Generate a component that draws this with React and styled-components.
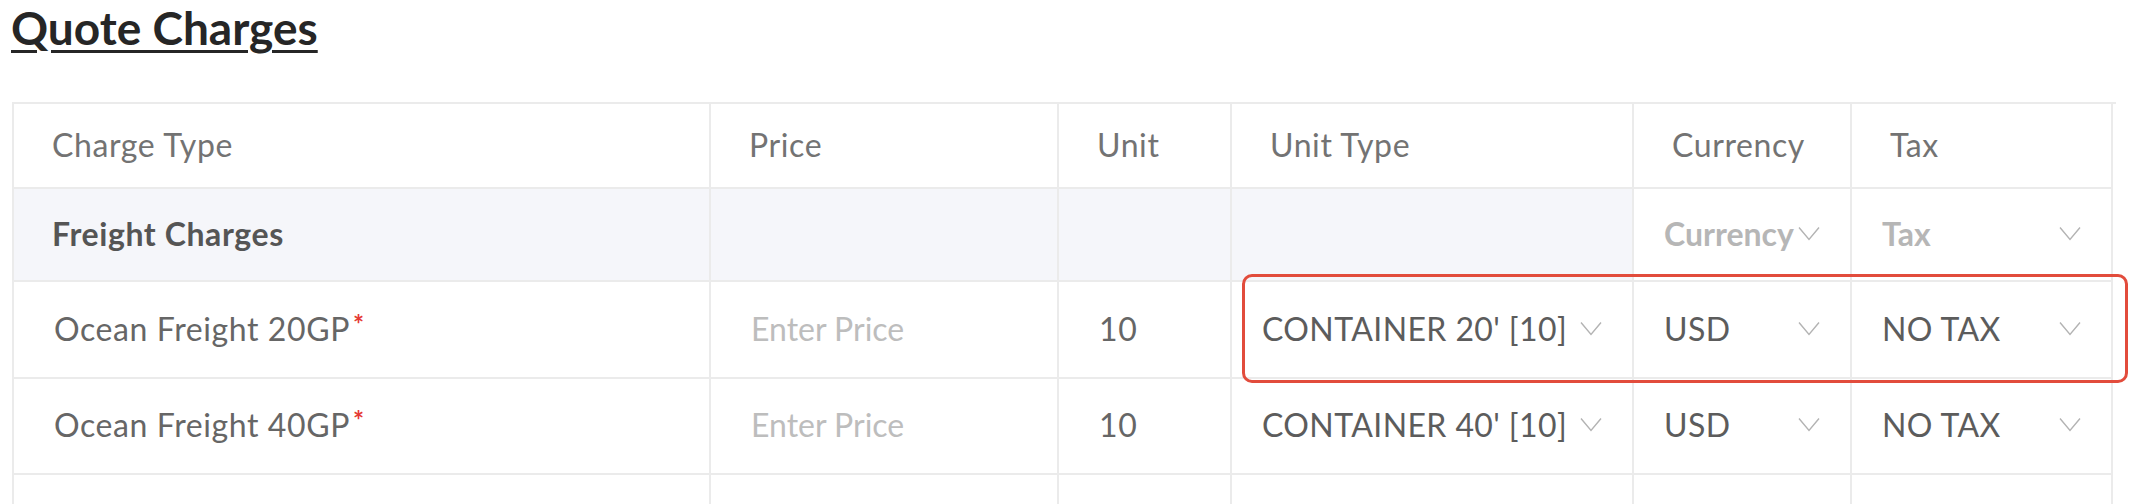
import React from 'react';
import styled, { createGlobalStyle } from 'styled-components';

const GlobalStyle = createGlobalStyle`
    html, body {
        margin: 0;
        padding: 0;
        overflow: hidden;
        background: #ffffff;
        font-family: Lato, "Noto Sans", sans-serif;
    }
`;

/** Page -- Container and Title */
const Page = styled.div`
    padding: 5px 12px 0 12px;
`;

const Title = styled.h1`
    margin: 0 0 52px -1px;
    font-size: 46px;
    line-height: 45px;
    font-weight: 700;
    color: #262626;
    text-decoration: underline;
    text-decoration-thickness: 3px;
    text-underline-offset: 5px;
`;

/** Table -- Grid and Cells */
const Table = styled.div`
    position: relative;
    display: grid;
    width: 2102px;
    grid-template-columns: 697px 348px 173px 402px 218px 261px;
    grid-template-rows: 85px 93px 97px 96px 96px;
    border-top: 2px solid #ebebeb;
    border-left: 2px solid #ebebeb;
`;

const Cell = styled.div`
    box-sizing: border-box;
    display: flex;
    align-items: center;
    padding: 0 ${({ $pad }) => $pad ?? 38}px 3px ${({ $pad }) => $pad ?? 38}px;
    border-right: 2px solid #ebebeb;
    border-bottom: 2px solid #ebebeb;
    background: ${({ $shade }) => ($shade ? '#f5f6fa' : '#ffffff')};
    font-size: 32px;
    letter-spacing: 0.6px;
    color: #6a6a6a;
    white-space: nowrap;
    min-width: 0;
`;

const HeadLabel = styled.span`
    color: #737373;
`;

const GroupLabel = styled.span`
    font-weight: 700;
    color: #555555;
`;

const ChargeName = styled.span`
    color: #666666;
    padding-left: 2px;
`;

const Required = styled.span`
    color: #e53935;
    font-size: 26px;
    font-weight: 700;
    margin-left: 3px;
    position: relative;
    top: -7px;
`;

const Placeholder = styled.span`
    color: #bdbdbd;
    padding-left: 2px;
    letter-spacing: 0;
`;

const Value = styled.span`
    color: #666666;
    padding-left: 2px;
`;

/** Select -- value and chevron */
const SelectBox = styled.div`
    display: flex;
    align-items: center;
    justify-content: space-between;
    width: 100%;
    gap: 4px;
`;

const SelectValue = styled.span`
    color: ${({ $muted }) => ($muted ? '#b6b6b6' : '#5c5c5c')};
    font-weight: ${({ $muted }) => ($muted ? 700 : 400)};
    letter-spacing: ${({ $muted }) => ($muted ? '0' : '0.4px')};
`;

const Chevron = styled.svg`
    flex: none;
    width: 22px;
    height: 15px;
`;

/** Annotation drawn over the first charge row */
const Highlight = styled.div`
    position: absolute;
    left: 1228px;
    top: 170px;
    width: 886px;
    height: 109px;
    box-sizing: border-box;
    border: 3px solid #e24c3c;
    border-radius: 10px;
    pointer-events: none;
`;

const Select = ({ value, muted }) => (
    <SelectBox>
        <SelectValue $muted={muted}>{value}</SelectValue>
        <Chevron viewBox="0 0 22 15" fill="none">
            <polyline points="1,1.5 11,13.5 21,1.5" stroke="#b3b3b3" strokeWidth="1.4" />
        </Chevron>
    </SelectBox>
);

const headers = ['Charge Type', 'Price', 'Unit', 'Unit Type', 'Currency', 'Tax'];

const charges = [
    { name: 'Ocean Freight 20GP', unit: '10', unitType: "CONTAINER 20' [10]" },
    { name: 'Ocean Freight 40GP', unit: '10', unitType: "CONTAINER 40' [10]" },
];

export default function App() {
    return (
        <>
            <GlobalStyle />
            <Page>
                <Title>Quote Charges</Title>
                <Table>
                    {headers.map((h) => (
                        <Cell key={h}>
                            <HeadLabel>{h}</HeadLabel>
                        </Cell>
                    ))}

                    <Cell $shade>
                        <GroupLabel>Freight Charges</GroupLabel>
                    </Cell>
                    <Cell $shade />
                    <Cell $shade />
                    <Cell $shade />
                    <Cell $pad={30}>
                        <Select value="Currency" muted />
                    </Cell>
                    <Cell $pad={30}>
                        <Select value="Tax" muted />
                    </Cell>

                    {charges.map((c) => (
                        <React.Fragment key={c.name}>
                            <Cell>
                                <ChargeName>
                                    {c.name}
                                    <Required>*</Required>
                                </ChargeName>
                            </Cell>
                            <Cell>
                                <Placeholder>Enter Price</Placeholder>
                            </Cell>
                            <Cell>
                                <Value>{c.unit}</Value>
                            </Cell>
                            <Cell $pad={30}>
                                <Select value={c.unitType} />
                            </Cell>
                            <Cell $pad={30}>
                                <Select value="USD" />
                            </Cell>
                            <Cell $pad={30}>
                                <Select value="NO TAX" />
                            </Cell>
                        </React.Fragment>
                    ))}

                    {headers.map((h) => (
                        <Cell key={`empty-${h}`} />
                    ))}

                    <Highlight />
                </Table>
            </Page>
        </>
    );
}
